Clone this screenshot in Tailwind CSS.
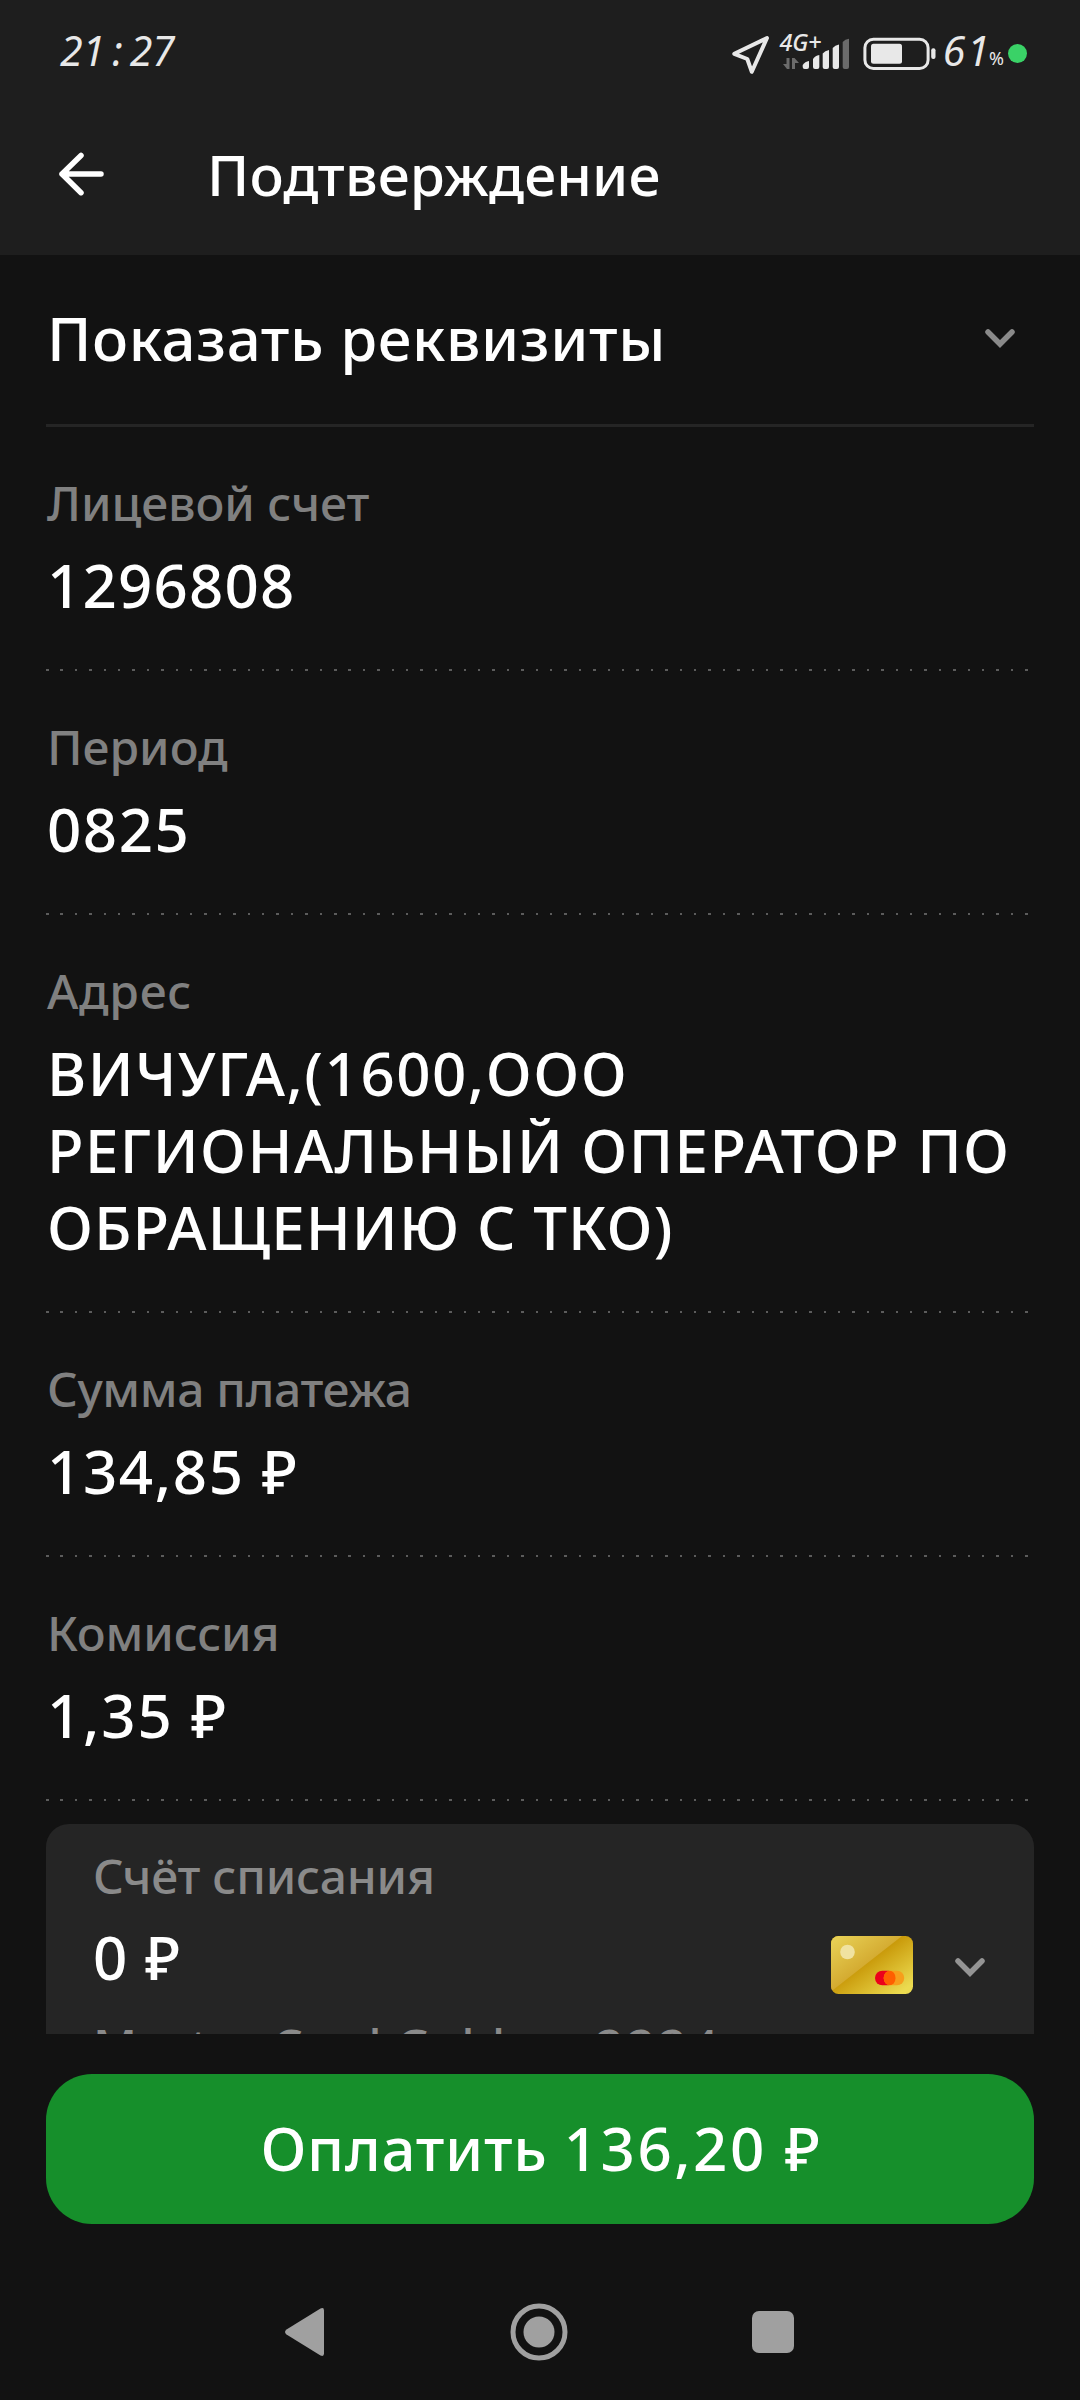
<!DOCTYPE html>
<html lang="ru">
<head>
    <meta charset="UTF-8">
    <meta name="viewport" content="width=device-width, initial-scale=1.0">
    <title>Подтверждение</title>
    <script src="https://cdn.jsdelivr.net/npm/@tailwindcss/browser@4"></script>
</head>
<body class="bg-[#121212]">
<div class="w-[1080px] h-[2400px] overflow-hidden flex flex-col bg-[#121212] text-white font-['Noto_Sans',sans-serif] font-medium">

    <header class="h-[255px] shrink-0 bg-[#1e1e1e]">
        <!-- Status bar -->
        <div class="h-[100px] pl-[60px] pr-[53px] flex items-center justify-between text-[#e8e8e8] text-[41px] leading-none italic font-normal">
            <div class="flex">21<span class="mx-[7px]">:</span>27</div>
            <div class="flex items-center">
                <svg class="w-[40px] h-[42px] mt-[9px]" viewBox="731 34 40 42" fill="none" stroke="#e8e8e8" stroke-width="4" stroke-linejoin="round">
                    <path d="M734.3 53.8L767 38L751.8 71.8L747.3 59Z"/>
                </svg>
                <svg class="w-[73px] h-[50px] -mt-[4px] ml-[7px] overflow-visible" viewBox="778 23 73 50">
                    <text x="779.5" y="51" font-size="23.5" font-weight="500" letter-spacing="-0.3" fill="#e8e8e8">4G+</text>
                    <g fill="#6b6b6b">
                        <path d="M786.5 58h3v11h-2.5l-4-5h3.5z"/>
                        <path d="M795 69h-3V58h2.5l4.5 5H795z"/>
                        <path d="M842.7 42Q845 39 849 38.700V67q0 2-2 2h-2.3q-2 0-2-2z"/>
                    </g>
                    <g fill="#e8e8e8">
                        <path d="M802.7 65Q805 61.5 809 61V67q0 2-2 2h-2.3q-2 0-2-2z"/>
                        <path d="M813 59Q815.3 55.5 819.3 55V67q0 2-2 2h-2.3q-2 0-2-2z"/>
                        <path d="M822.7 53.5Q825 50.5 829 50V67q0 2-2 2h-2.3q-2 0-2-2z"/>
                        <path d="M832.7 48Q835 45 839 44.5V67q0 2-2 2h-2.3q-2 0-2-2z"/>
                    </g>
                </svg>
                <svg class="w-[74px] h-[34px] mt-[8px] ml-[12px]" viewBox="863 37 74 34">
                    <rect x="864.900" y="39.300" width="63.200" height="29.200" rx="8.5" fill="none" stroke="#e8e8e8" stroke-width="3"/>
                    <rect x="871" y="43.8" width="31" height="20" rx="2.5" fill="#e8e8e8"/>
                    <rect x="931.2" y="48.3" width="4.3" height="10.7" rx="2" fill="#e8e8e8"/>
                </svg>
                <span class="ml-[6px] tracking-[1.5px]">61</span>
                <span class="text-[18px] not-italic mt-[16px] -ml-[2px]">%</span>
                <span class="w-[19px] h-[19px] mt-[7px] ml-[4px] rounded-full bg-[#3ad267]"></span>
            </div>
        </div>
        <!-- App bar -->
        <div class="h-[148px] pl-[58px] flex items-center">
            <svg class="w-[48px] h-[46px]" viewBox="58 151.5 48 46" fill="none" stroke="#fff" stroke-width="5.5" stroke-linecap="round" stroke-linejoin="round">
                <path d="M81 156L62 174.5L81 193.2M62 174.5H101"/>
            </svg>
            <h1 class="ml-[101px] text-[57px] leading-[80px] tracking-[0.1px]">Подтверждение</h1>
        </div>
    </header>

    <main class="h-[1779px] shrink-0 px-[46px] overflow-hidden">
        <div class="h-[172px] pb-[3px] pl-[1px] pr-[19px] border-b-3 border-[#252525] flex items-center justify-between">
            <span class="text-[60px] leading-[77px] tracking-[0.6px]">Показать реквизиты</span>
            <svg class="w-[30px] h-[20px] mt-[1px]" viewBox="0 0 30 20" fill="none" stroke="#8a8a8a" stroke-width="5.5" stroke-linecap="round"><path d="M3 3L15 15L27 3"/></svg>
        </div>

        <div class="pt-[46px]">
            <div class="pl-[1px] text-[48px] leading-[60px] text-[#808080] tracking-[-0.08px]">Лицевой счет</div>
            <div class="pl-[1px] mt-[14px] text-[60px] leading-[77px] tracking-[1.2px]">1296808</div>
            <div class="mt-[45px] h-[2px] bg-[repeating-linear-gradient(90deg,#5c5c5c_0_2.5px,transparent_2.5px_14.4px)]"></div>
        </div>
        <div class="pt-[46px]">
            <div class="pl-[1px] text-[48px] leading-[60px] text-[#808080]">Период</div>
            <div class="pl-[1px] mt-[14px] text-[60px] leading-[77px] tracking-[1.5px]">0825</div>
            <div class="mt-[45px] h-[2px] bg-[repeating-linear-gradient(90deg,#5c5c5c_0_2.5px,transparent_2.5px_14.4px)]"></div>
        </div>
        <div class="pt-[46px]">
            <div class="pl-[1px] text-[48px] leading-[60px] text-[#808080] tracking-[0.7px]">Адрес</div>
            <div class="pl-[1px] mt-[14px] text-[60px] leading-[77px] whitespace-nowrap">
                <div class="tracking-[1.5px]">ВИЧУГА,(1600,ООО</div>
                <div class="tracking-[1.4px]">РЕГИОНАЛЬНЫЙ ОПЕРАТОР ПО</div>
                <div class="tracking-[1.1px]">ОБРАЩЕНИЮ С ТКО)</div>
            </div>
            <div class="mt-[45px] h-[2px] bg-[repeating-linear-gradient(90deg,#5c5c5c_0_2.5px,transparent_2.5px_14.4px)]"></div>
        </div>
        <div class="pt-[46px]">
            <div class="pl-[1px] text-[48px] leading-[60px] text-[#808080] tracking-[-0.35px]">Сумма платежа</div>
            <div class="pl-[1px] mt-[14px] text-[60px] leading-[77px] tracking-[1.6px]">134,85 ₽</div>
            <div class="mt-[45px] h-[2px] bg-[repeating-linear-gradient(90deg,#5c5c5c_0_2.5px,transparent_2.5px_14.4px)]"></div>
        </div>
        <div class="pt-[46px]">
            <div class="pl-[1px] text-[48px] leading-[60px] text-[#808080] tracking-[-0.15px]">Комиссия</div>
            <div class="pl-[1px] mt-[14px] text-[60px] leading-[77px] tracking-[1.8px]">1,35 ₽</div>
            <div class="mt-[45px] h-[2px] bg-[repeating-linear-gradient(90deg,#5c5c5c_0_2.5px,transparent_2.5px_14.4px)]"></div>
        </div>

        <!-- Debit account -->
        <div class="mt-[23px] h-[280px] pt-[22px] pl-[47px] pr-[49px] rounded-t-[23px] bg-[#252525]">
            <div class="text-[48px] leading-[60px] text-[#8a8a8a] tracking-[-0.25px]">Счёт списания</div>
            <div class="mt-[13px] flex items-center justify-between">
                <span class="text-[60px] leading-[77px] tracking-[1px]">0 ₽</span>
                <div class="flex items-center gap-[42px] mt-[15px]">
                    <svg class="w-[82px] h-[58px]" viewBox="0 0 82 58">
                        <defs>
                            <linearGradient id="gold" gradientUnits="userSpaceOnUse" x1="36" y1="26" x2="62" y2="62">
                                <stop offset="0" stop-color="#c99a0a"/>
                                <stop offset="1" stop-color="#ecdb50"/>
                            </linearGradient>
                            <linearGradient id="shine" gradientUnits="userSpaceOnUse" x1="6" y1="-6" x2="34" y2="32">
                                <stop offset="0" stop-color="#ead55a"/>
                                <stop offset="1" stop-color="#d3a92f"/>
                            </linearGradient>
                            <clipPath id="card"><rect width="82" height="58" rx="7.5"/></clipPath>
                        </defs>
                        <g clip-path="url(#card)">
                            <rect width="82" height="58" fill="url(#gold)"/>
                            <path d="M0 0H71L2 54L0 55Z" fill="url(#shine)"/>
                            <circle cx="16.5" cy="16" r="7.3" fill="#f0e2a0"/>
                            <rect x="44" y="34.7" width="20.5" height="14.6" rx="7.3" fill="#eb001b"/>
                            <rect x="52.7" y="34.7" width="20.5" height="14.6" rx="7.3" fill="#f79e1b"/>
                            <rect x="52.7" y="34.7" width="11.8" height="14.6" rx="5.9" ry="7" fill="#ff5f00"/>
                        </g>
                    </svg>
                    <svg class="w-[30px] h-[20px] mt-[5px]" viewBox="0 0 30 20" fill="none" stroke="#949494" stroke-width="5.5" stroke-linecap="round"><path d="M3 3L15 15L27 3"/></svg>
                </div>
            </div>
            <div class="mt-[20px] text-[48px] leading-[60px] text-[#8a8a8a] tracking-[0.8px]">Master Card Gold <span class="mx-[13px]">••</span> <span class="tracking-[4px]">2224</span></div>
        </div>
    </main>

    <button class="mt-[40px] mx-[46px] h-[150px] shrink-0 pb-[2px] pl-[3px] rounded-[46px] bg-[#168f2b] text-[60px] leading-[77px] tracking-[0.7px]">Оплатить <span class="tracking-[2.5px]">136,20 ₽</span></button>

    <!-- System navigation -->
    <nav class="h-[176px] mt-[20px] shrink-0 pl-[284px] pr-[286px] flex items-center justify-between">
        <svg class="w-[42px] h-[52px]" viewBox="284 2306 42 52" fill="#a0a0a0"><path d="M286.5 2329.5L320.5 2308.5Q324 2307 324 2310.5V2353.5Q324 2357 320.5 2355.5L286.5 2334.5Q283.5 2332 286.5 2329.5Z"/></svg>
        <svg class="w-[58px] h-[58px]" viewBox="-29 -29 58 58"><circle r="26" fill="none" stroke="#a0a0a0" stroke-width="5"/><circle r="15.5" fill="#a0a0a0"/></svg>
        <div class="w-[42px] h-[42px] rounded-[7px] bg-[#a0a0a0]"></div>
    </nav>
</div>
</body>
</html>
